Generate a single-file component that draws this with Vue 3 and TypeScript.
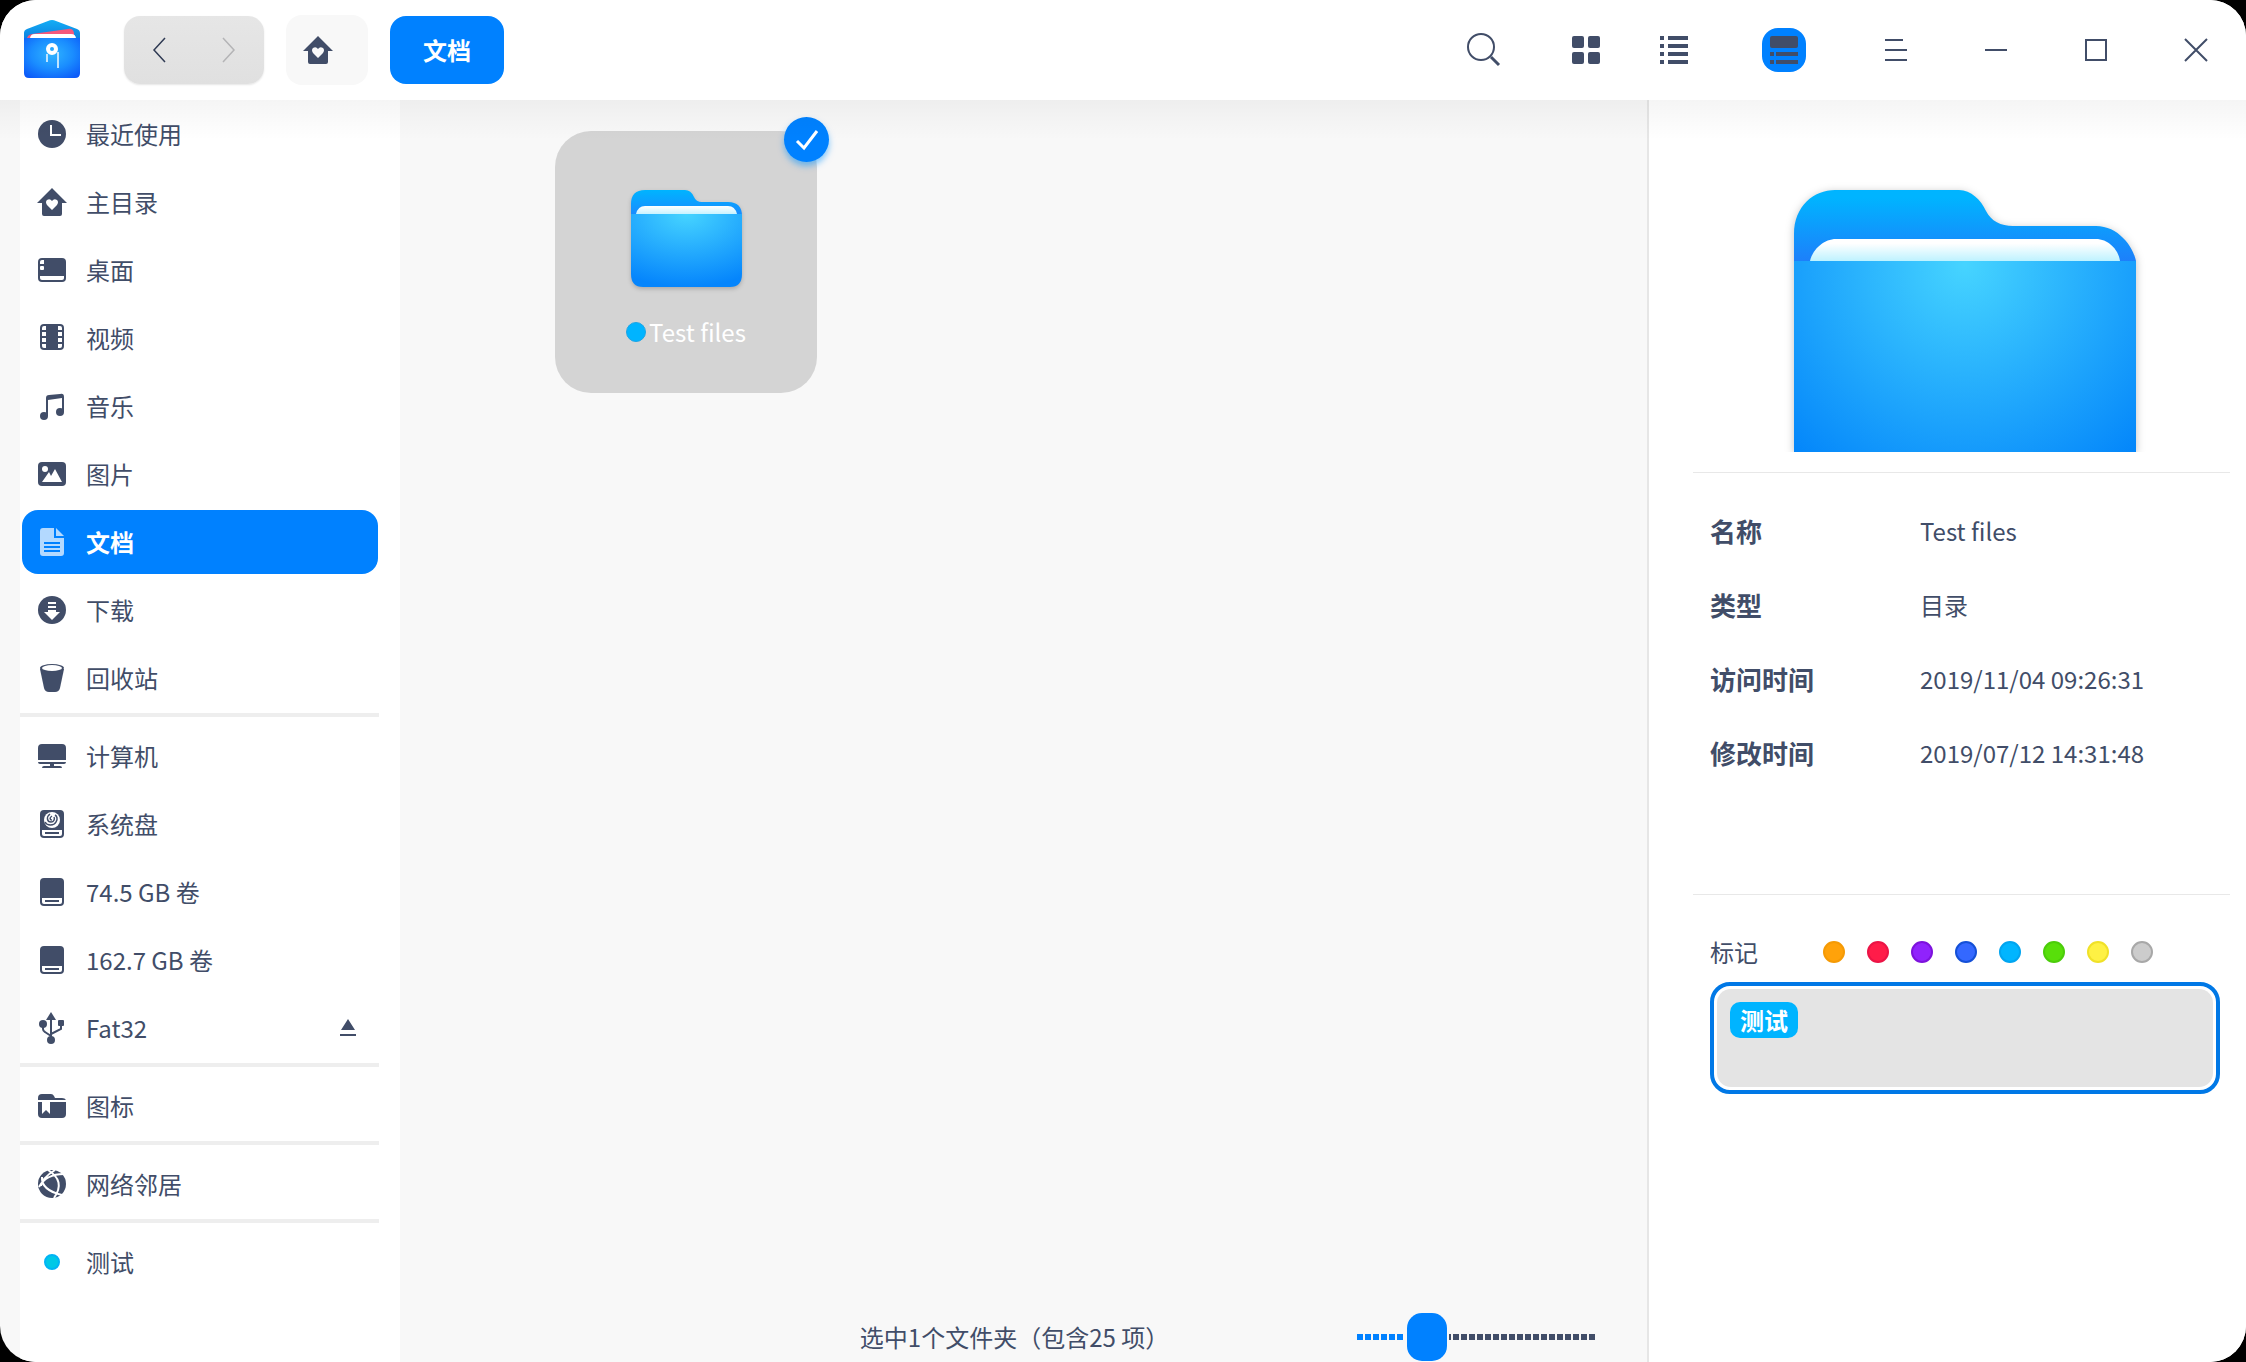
<script setup lang="ts">
import { ref } from 'vue'

interface Place {
  id: string
  label: string
  icon: string
  ejectable?: boolean
}

const groups: Place[][] = [
  [
    { id: 'recent', label: '最近使用', icon: 'clock' },
    { id: 'home', label: '主目录', icon: 'home' },
    { id: 'desktop', label: '桌面', icon: 'desktop' },
    { id: 'videos', label: '视频', icon: 'video' },
    { id: 'music', label: '音乐', icon: 'music' },
    { id: 'pictures', label: '图片', icon: 'picture' },
    { id: 'documents', label: '文档', icon: 'document' },
    { id: 'downloads', label: '下载', icon: 'download' },
    { id: 'trash', label: '回收站', icon: 'trash' },
  ],
  [
    { id: 'computer', label: '计算机', icon: 'computer' },
    { id: 'system', label: '系统盘', icon: 'system' },
    { id: 'vol1', label: '74.5 GB 卷', icon: 'disk' },
    { id: 'vol2', label: '162.7 GB 卷', icon: 'disk' },
    { id: 'fat32', label: 'Fat32', icon: 'usb', ejectable: true },
  ],
  [{ id: 'bookmark', label: '图标', icon: 'bookmark' }],
  [{ id: 'network', label: '网络邻居', icon: 'globe' }],
  [{ id: 'tag', label: '测试', icon: 'dot' }],
]

const current = ref('documents')
const zoom = ref(25)
const tagText = ref('')

const details = [
  { label: '名称', value: 'Test files' },
  { label: '类型', value: '目录' },
  { label: '访问时间', value: '2019/11/04 09:26:31' },
  { label: '修改时间', value: '2019/07/12 14:31:48' },
]

const tagColors = ['orange', 'red', 'purple', 'blue', 'cyan', 'green', 'yellow', 'gray']
</script>

<template>
  <div class="window">
    <header class="titlebar">
      <svg class="logo" viewBox="0 0 56 60" aria-hidden="true">
        <defs>
          <radialGradient id="logo-front" cx="0.5" cy="0.4" r="0.75">
            <stop offset="0" stop-color="#2fb4ff" />
            <stop offset="0.5" stop-color="#1a8dff" />
            <stop offset="1" stop-color="#0a54f8" />
          </radialGradient>
          <linearGradient id="logo-back" x1="0" y1="0" x2="0" y2="1">
            <stop offset="0" stop-color="#14aef5" />
            <stop offset="1" stop-color="#0b78dc" />
          </linearGradient>
        </defs>
        <path d="M0 22V13Q0 10 3 9L24 1Q28-1 32 1L53 9Q56 10 56 13V22Z" fill="url(#logo-back)" />
        <path d="M3 19Q3 15 8 14L44 9Q49 8 50 13V19Z" fill="#f5587c" />
        <path d="M6 19Q6 14 11 14H47Q52 14 52 19Z" fill="#fff" />
        <path d="M0 18H56V53Q56 58 51 58H5Q0 58 0 53Z" fill="url(#logo-front)" />
        <circle cx="28" cy="29" r="4" fill="none" stroke="#fff" stroke-width="4" />
        <path d="M23 34V42M34 32V48" stroke="#bfe4ff" stroke-width="2" fill="none" />
      </svg>

      <div class="history">
        <button type="button" aria-label="后退">
          <svg width="12" height="24" viewBox="0 0 12 24"><path d="M12 0L1 12L12 24" fill="none" stroke="#303b54" stroke-width="1.5" /></svg>
        </button>
        <button type="button" aria-label="前进" disabled>
          <svg width="12" height="24" viewBox="0 0 12 24"><path d="M0 0L11 12L0 24" fill="none" stroke="#b4b4b6" stroke-width="1.5" /></svg>
        </button>
      </div>
      <button type="button" class="crumb-home" aria-label="主目录">
        <svg width="28" height="28" viewBox="0 0 28 28"><path d="M14 0L29 15H24V26Q24 28 22 28H6Q4 28 4 26V15H-1Z M14 22L19 17Q21 14 19 12Q16 10 14 13Q12 10 9 12Q7 14 9 17Z" fill="#414d68" fill-rule="evenodd" /></svg>
      </button>
      <button type="button" class="crumb-current">文档</button>

      <div class="tools">
        <button type="button" class="tool search" aria-label="搜索">
          <svg width="34" height="34" viewBox="0 0 34 34"><g fill="none" stroke="#414d68" stroke-width="2"><circle cx="14" cy="14" r="13" /><path d="M24 24L32 32" stroke-width="3" /></g></svg>
        </button>
        <button type="button" class="tool grid-view" aria-label="图标视图">
          <svg width="28" height="28" viewBox="0 0 28 28" fill="#414d68"><rect width="12" height="12" rx="2" /><rect x="16" width="12" height="12" rx="2" /><rect y="16" width="12" height="12" rx="2" /><rect x="16" y="16" width="12" height="12" rx="2" /></svg>
        </button>
        <button type="button" class="tool list-view" aria-label="列表视图">
          <svg width="28" height="28" viewBox="0 0 28 28" fill="#414d68"><path d="M0 0h4v4H0zM8 0h20v4H8zM0 8h4v4H0zM8 8h20v4H8zM0 16h4v4H0zM8 16h20v4H8zM0 24h4v4H0zM8 24h20v4H8z" /></svg>
        </button>
        <button type="button" class="tool detail-view" aria-label="详细信息" aria-pressed="true">
          <svg width="28" height="28" viewBox="0 0 28 28" fill="#414d68"><rect width="28" height="12" rx="2" /><path d="M0 16h4v4H0zM6 16h22v4H6zM0 24h4v4H0zM6 24h22v4H6z" /></svg>
        </button>
        <button type="button" class="tool window-button" aria-label="菜单">
          <svg width="22" height="22" viewBox="0 0 22 22"><path d="M0 1H18M0 11H22M0 21H22" stroke="#414d68" stroke-width="2" /></svg>
        </button>
        <button type="button" class="tool window-button" aria-label="最小化">
          <svg width="22" height="22" viewBox="0 0 22 22"><path d="M0 11H22" stroke="#414d68" stroke-width="2" /></svg>
        </button>
        <button type="button" class="tool window-button" aria-label="最大化">
          <svg width="22" height="22" viewBox="0 0 22 22"><rect x="1" y="1" width="20" height="20" fill="none" stroke="#414d68" stroke-width="2" /></svg>
        </button>
        <button type="button" class="tool window-button" aria-label="关闭">
          <svg width="22" height="22" viewBox="0 0 22 22"><path d="M0 0L22 22M22 0L0 22" stroke="#414d68" stroke-width="2" /></svg>
        </button>
      </div>
    </header>

    <div class="body">
      <nav class="sidebar">
        <ul v-for="(group, index) in groups" :key="index" class="group">
          <li v-for="place in group" :key="place.id" class="place" :class="{ active: place.id === current }">
            <a :href="'#' + place.id" @click="current = place.id">
              <svg class="place-icon" width="28" height="28" viewBox="0 0 28 28" fill="currentColor" aria-hidden="true">
                <template v-if="place.icon === 'clock'">
                  <circle cx="14" cy="14" r="14" />
                  <path d="M13 5V15H23" fill="none" stroke="#fff" stroke-width="2" />
                </template>
                <path v-else-if="place.icon === 'home'" fill-rule="evenodd" d="M14 0L29 15H24V26Q24 28 22 28H6Q4 28 4 26V15H-1Z M14 22L19 17Q21 14 19 12Q16 10 14 13Q12 10 9 12Q7 14 9 17Z" />
                <template v-else-if="place.icon === 'desktop'">
                  <rect y="2" width="28" height="24" rx="4" />
                  <g fill="#fff"><path d="M2 8V6Q2 4 4 4H6V8Z" /><rect x="2" y="10" width="4" height="4" rx="1" /><path d="M2 20H26V22Q26 24 24 24H4Q2 24 2 22Z" /></g>
                </template>
                <template v-else-if="place.icon === 'video'">
                  <rect x="2" width="24" height="26" rx="4" />
                  <path fill="#fff" d="M4 6V4Q4 2 6 2H8V6ZM4 8h4v4H4zM4 14h4v4H4zM4 20H8V24H6Q4 24 4 22ZM24 6V4Q24 2 22 2H20V6ZM20 8h4v4h-4zM20 14h4v4h-4zM24 20H20V24H22Q24 24 24 22Z" />
                </template>
                <template v-else-if="place.icon === 'music'">
                  <path d="M8 24V6Q8 3 11 3L22 2Q26 1 26 5V20H24V6L10 8V24Z" />
                  <circle cx="6" cy="24" r="4" />
                  <circle cx="22" cy="20" r="4" />
                </template>
                <template v-else-if="place.icon === 'picture'">
                  <rect y="2" width="28" height="24" rx="4" />
                  <g fill="#fff"><circle cx="7" cy="9" r="3" /><path d="M4 22L11 12L13 16L17 9L24 22Z" /></g>
                </template>
                <template v-else-if="place.icon === 'document'">
                  <path d="M5 0H16V10H26V25Q26 28 23 28H5Q2 28 2 25V3Q2 0 5 0Z" />
                  <path d="M18 0L26 8H18Z" />
                  <path d="M6 15H22M6 19H22M6 23H22" stroke="#0081ff" stroke-width="2" />
                </template>
                <template v-else-if="place.icon === 'download'">
                  <circle cx="14" cy="14" r="14" />
                  <path fill="#fff" d="M10 6h8v2h-8zM10 10h8v2h-8zM10 14H18V16H22L14 24L6 16H10Z" />
                </template>
                <template v-else-if="place.icon === 'trash'">
                  <path d="M2 5L6 24Q7 28 11 28H17Q21 28 22 24L26 5Z" />
                  <ellipse cx="14" cy="4" rx="12" ry="4" />
                  <ellipse cx="14" cy="4" rx="10" ry="3" fill="#fff" />
                </template>
                <path v-else-if="place.icon === 'computer'" d="M4 2H24Q28 2 28 6V18H0V6Q0 2 4 2ZM0 20H28Q28 22 26 22H16V24H22Q24 24 24 26H4Q4 24 6 24H12V22H2Q0 22 0 20Z" />
                <template v-else-if="place.icon === 'system'">
                  <rect x="2" width="24" height="28" rx="4" />
                  <circle cx="14" cy="10" r="8" fill="#fff" />
                  <g fill="none" stroke="currentColor" stroke-width="1.5"><path d="M12 4C8 7 9 12 13 12C16 12 17 9 16 7M7 12C9 16 16 16 18 12C20 9 19 6 17 5M14 6C11 8 12 10 14 10" /></g>
                  <path d="M4 20H24V24Q24 26 22 26H6Q4 26 4 24Z" fill="#fff" />
                  <path d="M7 23H21" stroke="currentColor" stroke-width="2" />
                </template>
                <template v-else-if="place.icon === 'disk'">
                  <rect x="2" width="24" height="28" rx="4" />
                  <path d="M4 20H24V24Q24 26 22 26H6Q4 26 4 24Z" fill="#fff" />
                  <path d="M7 23H21" stroke="currentColor" stroke-width="2" />
                </template>
                <template v-else-if="place.icon === 'usb'">
                  <path d="M13-2L18 6H8Z" />
                  <path d="M13 4V26M5 10V15Q5 17 7 18L13 22M23 10V15L13 20" fill="none" stroke="currentColor" stroke-width="2" />
                  <circle cx="5" cy="10" r="4" /><rect x="20" y="6" width="6" height="6" rx="1" /><circle cx="13" cy="26" r="4" />
                </template>
                <template v-else-if="place.icon === 'bookmark'">
                  <path d="M0 8V6Q0 2 4 2H13Q15 2 16 4L17 6H24Q27 6 28 8Z" />
                  <path fill-rule="evenodd" d="M0 10H28V22Q28 26 24 26H4Q0 26 0 22ZM4 10V22L8 18L12 22V10Z" />
                </template>
                <template v-else-if="place.icon === 'globe'">
                  <circle cx="14" cy="14" r="14" />
                  <g fill="none" stroke="#fff" stroke-width="2"><path d="M1 17Q8 4 26 4M10 0Q28 11 16 28M4 7Q3 20 24 25M17 0Q4 8 3 16" /></g>
                </template>
                <circle v-else cx="14" cy="14" r="7" fill="#00c8e6" stroke="#00b4f5" stroke-width="2" />
              </svg>
              <span>{{ place.label }}</span>
            </a>
            <button v-if="place.ejectable" type="button" class="eject" aria-label="弹出">
              <svg width="16" height="18" viewBox="0 0 16 18" fill="#414d68"><path d="M8 0L15 11H1ZM0 15h16v2H0z" /></svg>
            </button>
          </li>
        </ul>
      </nav>

      <main class="content">
        <div class="files">
          <figure class="file">
            <svg class="file-icon" width="122" height="108" viewBox="0 0 122 108" aria-hidden="true">
              <defs>
                <linearGradient id="tab" x1="0" y1="0" x2="0" y2="1"><stop offset="0" stop-color="#00b4ff" /><stop offset="1" stop-color="#1e82ff" /></linearGradient>
                <radialGradient id="front" cx="0.5" cy="0" r="1"><stop offset="0" stop-color="#46d4ff" /><stop offset="1" stop-color="#0585fc" /></radialGradient>
                <linearGradient id="sheet" x1="0" y1="0" x2="0" y2="1"><stop offset="0" stop-color="#fff" /><stop offset="1" stop-color="#c8f3ff" /></linearGradient>
              </defs>
              <path d="M6 30V14Q6 0 20 0H60Q66 0 69 7Q71 12 77 12H103Q117 12 117 26V30Z" fill="url(#tab)" />
              <path d="M11 24Q13 16 20 16H103Q110 16 112 24Z" fill="url(#sheet)" />
              <path d="M6 24H117V84Q117 97 105 97H18Q6 97 6 84Z" fill="url(#front)" />
            </svg>
            <figcaption><i class="file-tag"></i>Test files</figcaption>
            <span class="check">
              <svg width="22" height="20" viewBox="0 0 22 20"><path d="M1 11L8 18L21 1" fill="none" stroke="#fff" stroke-width="3" /></svg>
            </span>
          </figure>
        </div>
        <footer class="status">
          <span class="summary">选中1个文件夹（包含25 项）</span>
          <input v-model="zoom" class="zoom" type="range" min="0" max="100" aria-label="图标大小" />
        </footer>
      </main>

      <aside class="info">
        <svg class="preview" viewBox="0 0 374 272" aria-hidden="true">
          <defs>
            <linearGradient id="big-tab" x1="0" y1="0" x2="0" y2="1"><stop offset="0.1" stop-color="#00b4ff" /><stop offset="1" stop-color="#1e7dfa" /></linearGradient>
            <radialGradient id="big-front" gradientUnits="userSpaceOnUse" cx="187" cy="85" r="265"><stop offset="0" stop-color="#46d4ff" /><stop offset="1" stop-color="#0082fa" /></radialGradient>
            <linearGradient id="big-sheet" x1="0" y1="0" x2="0" y2="1"><stop offset="0.2" stop-color="#fff" /><stop offset="1" stop-color="#bef2ff" /></linearGradient>
          </defs>
          <g class="preview-folder">
            <path d="M16 84V54C16 26 36 10 57 10H181C193 10 203 20 208 31C213 41 223 46 235 46H318C340 46 355 66 358 81V84Z" fill="url(#big-tab)" />
            <path d="M32 81C35 68 47 59 58 59H318C329 59 340 68 342 81Z" fill="url(#big-sheet)" />
            <path d="M16 81H358V272H16Z" fill="url(#big-front)" />
          </g>
        </svg>
        <dl class="details">
          <div v-for="row in details" :key="row.label" class="row">
            <dt>{{ row.label }}</dt>
            <dd>{{ row.value }}</dd>
          </div>
        </dl>
        <section class="tags">
          <div class="tag-row">
            <label for="tag-input">标记</label>
            <div class="swatches">
              <button v-for="color in tagColors" :key="color" type="button" class="swatch" :class="color" :aria-label="color"></button>
            </div>
          </div>
          <div class="tag-box">
            <div class="tag-field">
              <span class="chip">测试</span>
              <input id="tag-input" v-model="tagText" type="text" />
            </div>
          </div>
        </section>
      </aside>
    </div>
  </div>
</template>

<style>
body {
  margin: 0;
  background: #000;
}
</style>

<style scoped>
.window {
  display: flex;
  flex-direction: column;
  min-height: 100vh;
  border-radius: 36px;
  overflow: hidden;
  background: #f8f8f8;
  color: #414d68;
  font: 24px/36px "Noto Sans CJK SC", sans-serif;
}

.window,
.window * {
  box-sizing: border-box;
}

button {
  display: flex;
  align-items: center;
  justify-content: center;
  padding: 0;
  border: 0;
  background: none;
  color: inherit;
  font: inherit;
}

svg {
  display: block;
  flex: none;
  overflow: visible;
}

.titlebar {
  display: flex;
  align-items: center;
  height: 100px;
  padding: 0 28px 0 24px;
  background: #fff;
}

.logo {
  width: 56px;
  height: 60px;
}

.history {
  display: flex;
  justify-content: center;
  width: 140px;
  margin-left: 44px;
  height: 68px;
  border-radius: 16px;
  background: linear-gradient(#e6e6e6, #e0e0e0);
  box-shadow: 0 1px 2px rgba(0, 0, 0, 0.1);
}

.history button {
  width: 71px;
}

.crumb-home {
  width: 82px;
  height: 70px;
  margin-left: 22px;
  padding-right: 18px;
  border-radius: 16px;
  background: #f8f8f8;
}

.crumb-current {
  width: 114px;
  height: 68px;
  margin-left: 22px;
  border-radius: 16px;
  background: #0081ff;
  color: #fff;
  font-weight: 700;
}

.tools {
  display: flex;
  align-items: center;
  margin-left: auto;
}

.tool {
  width: 44px;
  height: 44px;
}

.grid-view {
  margin-left: 58px;
}

.list-view {
  margin-left: 44px;
}

.detail-view {
  margin-left: 66px;
  border-radius: 16px;
  background: #0081ff;
}

.window-button {
  margin-left: 56px;
}

.detail-view + .window-button {
  margin-left: 68px;
}

.body {
  position: relative;
  display: flex;
  flex: 1;
}

.body::after {
  content: "";
  position: absolute;
  inset: 0 0 auto;
  height: 40px;
  background: linear-gradient(rgba(0, 0, 0, 0.04), rgba(0, 0, 0, 0));
  pointer-events: none;
}

.sidebar {
  width: 380px;
  flex: none;
  margin-left: 20px;
  background: #fff;
}

.group {
  display: flex;
  flex-direction: column;
  margin: 0;
  padding: 0;
  list-style: none;
}

.group + .group::before {
  content: "";
  height: 4px;
  margin: 1px 21px 5px 0;
  background: #eee;
}

.place {
  display: flex;
  align-items: center;
  height: 64px;
  margin: 2px 22px 2px 2px;
  border-radius: 16px;
}

.place a {
  display: flex;
  flex: 1;
  align-items: center;
  gap: 20px;
  height: 64px;
  padding-left: 16px;
  color: inherit;
  text-decoration: none;
}

.active {
  background: #0081ff;
  color: #fff;
  font-weight: 700;
}

.active .place-icon {
  color: #b3d9ff;
}

.eject {
  width: 40px;
  height: 40px;
  margin-right: 10px;
}

.content {
  display: flex;
  flex: 1;
  flex-direction: column;
  min-width: 0;
}

.files {
  flex: 1;
  padding: 31px 155px;
}

.file {
  position: relative;
  display: flex;
  flex-direction: column;
  align-items: center;
  width: 262px;
  height: 262px;
  margin: 0;
  padding-top: 59px;
  border-radius: 36px;
  background: #d4d4d4;
}

.file-icon {
  filter: drop-shadow(0 2px 2px rgba(0, 0, 0, 0.2));
}

.file figcaption {
  display: flex;
  align-items: center;
  gap: 3px;
  margin-top: 16px;
  color: #fff;
}

.file-tag {
  width: 20px;
  height: 20px;
  border: 1px solid #1ca5e6;
  border-radius: 10px;
  background: #00b4ff;
}

.check {
  position: absolute;
  top: -14px;
  right: -12px;
  display: flex;
  align-items: center;
  justify-content: center;
  width: 45px;
  height: 45px;
  border-radius: 23px;
  background: #0081ff;
  box-shadow: 0 4px 6px rgba(0, 145, 255, 0.5);
}

.status {
  display: grid;
  grid-template-columns: 1fr auto 1fr;
  align-items: center;
  height: 50px;
  padding: 0 50px 0 32px;
}

.summary {
  grid-column: 2;
}

.zoom {
  justify-self: end;
  width: 240px;
  height: 48px;
  margin: 0;
  appearance: none;
  background:
    repeating-linear-gradient(90deg, transparent 0 6px, #f8f8f8 6px 8px),
    linear-gradient(90deg, #0081ff 0 46px, #f8f8f8 46px 92px, #414d68 92px) center / 100% 6px no-repeat;
}

.zoom::-webkit-slider-thumb {
  width: 40px;
  height: 48px;
  appearance: none;
  border-radius: 15px;
  background: #0081ff;
}

.info {
  display: flex;
  flex-direction: column;
  width: 599px;
  flex: none;
  padding: 80px 16px 0 44px;
  border-left: 2px solid #e6e6e6;
  background: #fff;
}

.preview {
  width: 374px;
  height: 272px;
  margin-left: 85px;
  overflow: hidden;
}

.preview-folder {
  filter: drop-shadow(0 2px 4px rgba(0, 0, 0, 0.25));
}

.details {
  height: 422px;
  margin: 20px 0 0;
  padding: 21px 0 0 17px;
  border-top: 1px solid #e8e8e8;
}

.row {
  display: flex;
  align-items: center;
  height: 74px;
}

.row dt {
  width: 210px;
  font-size: 26px;
  font-weight: 700;
}

.row dd {
  margin: 0;
}

.tags {
  padding: 39px 10px 0 17px;
  border-top: 1px solid #e8e8e8;
}

.tag-row {
  display: flex;
  align-items: center;
  height: 36px;
}

.swatches {
  display: flex;
  gap: 22px;
  margin-left: 65px;
}

.swatch {
  width: 22px;
  height: 22px;
  border: 2px solid;
  border-radius: 11px;
}

.orange { border-color: #f59a05; background: #ffa20a; }
.red { border-color: #eb1446; background: #ff1c49; }
.purple { border-color: #7d12dc; background: #9023fc; }
.blue { border-color: #1450d7; background: #3468ff; }
.cyan { border-color: #00a5f0; background: #00b5ff; }
.green { border-color: #4bcd0a; background: #58df0a; }
.yellow { border-color: #f0e128; background: #fef144; }
.gray { border-color: #a8a8a8; background: #ccc; }

.tag-box {
  margin-top: 12px;
  padding: 3px;
  border: 4px solid #0078e6;
  border-radius: 20px;
}

.tag-field {
  display: flex;
  align-items: flex-start;
  gap: 8px;
  height: 98px;
  padding: 13px;
  border-radius: 14px;
  background: #e4e4e4;
}

.chip {
  padding: 0 10px;
  border-radius: 10px;
  background: #00b4ff;
  color: #fff;
  font-weight: 700;
}

.tag-field input {
  flex: 1;
  min-width: 0;
  height: 36px;
  padding: 0;
  border: 0;
  outline: 0;
  background: none;
  color: inherit;
  font: inherit;
}
</style>
